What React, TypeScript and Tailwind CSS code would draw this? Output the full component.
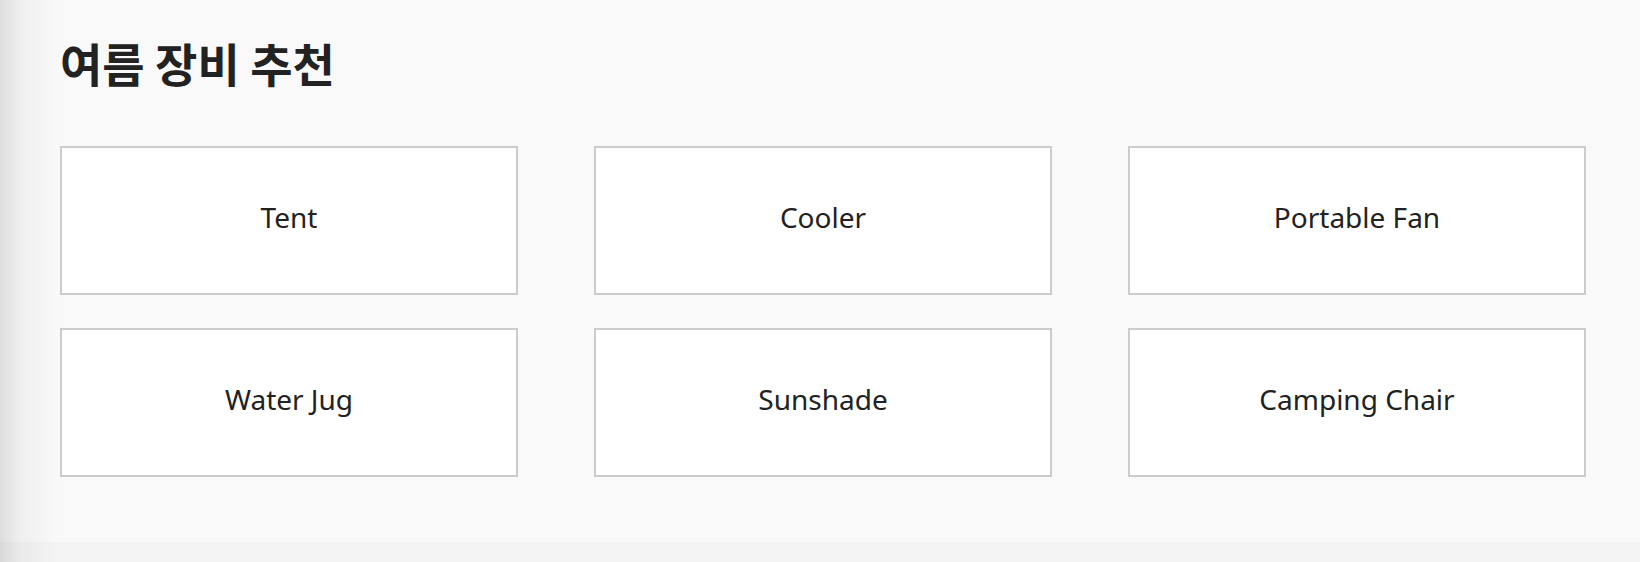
import React from "react";

const items = ["Tent", "Cooler", "Portable Fan", "Water Jug", "Sunshade", "Camping Chair"];

export default function App() {
  return (
    <div className="relative min-h-[562px] w-full bg-[#f4f4f4] text-[#222]" style={{ fontFamily: '"Noto Sans", "Noto Sans CJK KR", sans-serif' }}>
      <section className="bg-[#f9f9f9] pl-[60px] pr-[54px] pt-[30px] pb-[65px]">
        <h2 className="m-0 h-[64px] text-[46px] font-bold leading-[64px] text-[#222]" style={{ fontFamily: '"Noto Sans CJK KR", "Noto Sans", sans-serif' }}>
          여름 장비 추천
        </h2>
        <div className="mt-[52px] grid grid-cols-3 gap-x-[76px] gap-y-[33px]">
          {items.map((it) => (
            <div key={it} className="flex h-[149px] items-center justify-center border-2 border-[#cccccc] bg-white pb-2 text-[28px] text-[#222]">
              {it}
            </div>
          ))}
        </div>
      </section>
      <div className="pointer-events-none absolute left-0 top-0 h-full w-[60px] bg-[linear-gradient(to_right,rgba(0,0,0,0.11),rgba(0,0,0,0.04)_35%,rgba(0,0,0,0))]" />
    </div>
  );
}
